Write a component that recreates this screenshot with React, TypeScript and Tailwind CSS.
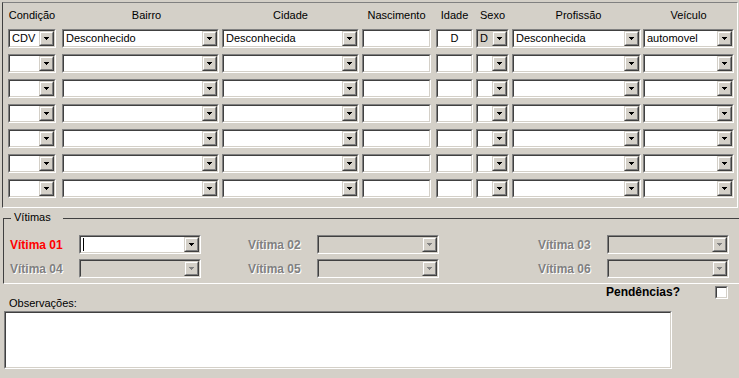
import React from "react";

const FONT = "font-['Liberation_Sans',Arial,sans-serif]";

function Arrow({ disabled }: { disabled?: boolean }) {
  const c = disabled ? "#808080" : "#000000";
  return (
    <svg width="5" height="3" viewBox="0 0 5 3" shapeRendering="crispEdges">
      <rect x="0" y="0" width="5" height="1" fill={c} />
      <rect x="1" y="1" width="3" height="1" fill={c} />
      <rect x="2" y="2" width="1" height="1" fill={c} />
    </svg>
  );
}

function DropBtn({ disabled }: { disabled?: boolean }) {
  return (
    <div className="w-[15px] h-full shrink-0 border border-t-[#d4d0c8] border-l-[#d4d0c8] border-r-[#404040] border-b-[#404040]">
      <div className="h-full border border-t-white border-l-white border-r-[#808080] border-b-[#808080] bg-[#d4d0c8] flex items-center justify-center">
        <Arrow disabled={disabled} />
      </div>
    </div>
  );
}

function Sunken({
  w,
  h = "h-[19px]",
  bg = "bg-white",
  children,
}: {
  w: string;
  h?: string;
  bg?: string;
  children?: React.ReactNode;
}) {
  return (
    <div className={`${w} ${h} shrink-0 border border-t-[#808080] border-l-[#808080] border-r-white border-b-white`}>
      <div className={`h-full border border-t-[#404040] border-l-[#404040] border-r-[#d4d0c8] border-b-[#d4d0c8] flex ${bg}`}>
        {children}
      </div>
    </div>
  );
}

function Combo({
  w,
  text = "",
  bg = "bg-white",
  disabled,
  caret,
}: {
  w: string;
  text?: string;
  bg?: string;
  disabled?: boolean;
  caret?: boolean;
}) {
  return (
    <Sunken w={w} bg={bg}>
      <div className="flex-1 min-w-0 flex items-center pl-[2px] text-[11px] leading-[13px] text-black whitespace-nowrap overflow-hidden">
        {caret && <div className="w-px h-[13px] bg-black" />}
        {text}
      </div>
      <DropBtn disabled={disabled} />
    </Sunken>
  );
}

function TextBox({ w, text = "", center }: { w: string; text?: string; center?: boolean }) {
  return (
    <Sunken w={w}>
      <div
        className={`flex-1 flex items-center text-[11px] leading-[13px] text-black ${
          center ? "justify-center" : "pl-[2px]"
        }`}
      >
        {text}
      </div>
    </Sunken>
  );
}

type Col = { w: string; ml: string; label: string; kind: "combo" | "text"; hdr: string };

const cols: Col[] = [
  { w: "w-[48px]", ml: "ml-0", label: "Condição", kind: "combo", hdr: "" },
  { w: "w-[157px]", ml: "ml-[6px]", label: "Bairro", kind: "combo", hdr: "pl-[12px]" },
  { w: "w-[137px]", ml: "ml-[3px]", label: "Cidade", kind: "combo", hdr: "" },
  { w: "w-[69px]", ml: "ml-[3px]", label: "Nascimento", kind: "text", hdr: "" },
  { w: "w-[37px]", ml: "ml-[5px]", label: "Idade", kind: "text", hdr: "" },
  { w: "w-[33px]", ml: "ml-[3px]", label: "Sexo", kind: "combo", hdr: "" },
  { w: "w-[129px]", ml: "ml-[3px]", label: "Profissão", kind: "combo", hdr: "pl-[4px]" },
  { w: "w-[91px]", ml: "ml-[2px]", label: "Veículo", kind: "combo", hdr: "" },
];

const firstRow = ["CDV", "Desconhecido", "Desconhecida", "", "D", "D", "Desconhecida", "automovel"];

function VLabel({ text, active }: { text: string; active?: boolean }) {
  return (
    <div
      className={`w-[69px] shrink-0 text-[12px] leading-[14px] font-bold ${
        active ? "text-[#ff0000]" : "text-[#808080] [text-shadow:1px_1px_0_#ffffff]"
      }`}
    >
      {text}
    </div>
  );
}

export default function App() {
  return (
    <div className={`w-[739px] h-[378px] bg-[#d4d0c8] overflow-hidden ${FONT} flex flex-col`}>
      {/* Top grid panel */}
      <div className="ml-[2px] mt-[2px] w-[736px] h-[206px] border border-t-[#808080] border-l-[#404040] border-r-white border-b-white pl-[5px] flex flex-col">
        <div className="flex h-[26px] items-center">
          {cols.map((c, i) => (
            <div
              key={i}
              className={`${c.w} ${c.ml} ${c.hdr} shrink-0 text-center text-[11px] leading-[13px] text-black whitespace-nowrap pb-[2px]`}
            >
              {c.label}
            </div>
          ))}
        </div>
        <div className="flex flex-col gap-[6px]">
          {Array.from({ length: 7 }).map((_, r) => (
            <div key={r} className="flex">
              {cols.map((c, i) => {
                const t = r === 0 ? firstRow[i] : "";
                return (
                  <div key={i} className={`${c.ml} shrink-0`}>
                    {c.kind === "combo" ? (
                      <Combo w={c.w} text={t} bg={r === 0 && i === 5 ? "bg-[#d4d0c8]" : "bg-white"} />
                    ) : (
                      <TextBox w={c.w} text={t} center={i === 4} />
                    )}
                  </div>
                );
              })}
            </div>
          ))}
        </div>
      </div>

      {/* Vítimas group */}
      <div className="relative ml-[3px] mt-[10px] h-[66px] border-t border-l border-t-[#404040] border-l-[#404040] border-b border-b-white pt-[16px] pl-[6px] flex flex-col gap-[5px]">
        <div className="absolute left-[7px] top-[-8px] bg-[#d4d0c8] pl-[3px] pr-[12px] text-[11px] leading-[13px] text-black">
          Vítimas
        </div>
        <div className="flex items-center">
          <VLabel text="Vítima 01" active />
          <Combo w="w-[122px]" caret />
          <div className="ml-[47px] flex items-center">
            <VLabel text="Vítima 02" />
            <Combo w="w-[122px]" bg="bg-[#d4d0c8]" disabled />
          </div>
          <div className="ml-[99px] flex items-center">
            <VLabel text="Vítima 03" />
            <Combo w="w-[122px]" bg="bg-[#d4d0c8]" disabled />
          </div>
        </div>
        <div className="flex items-center">
          <VLabel text="Vítima 04" />
          <Combo w="w-[122px]" bg="bg-[#d4d0c8]" disabled />
          <div className="ml-[47px] flex items-center">
            <VLabel text="Vítima 05" />
            <Combo w="w-[122px]" bg="bg-[#d4d0c8]" disabled />
          </div>
          <div className="ml-[99px] flex items-center">
            <VLabel text="Vítima 06" />
            <Combo w="w-[122px]" bg="bg-[#d4d0c8]" disabled />
          </div>
        </div>
      </div>

      {/* Observações / Pendências */}
      <div className="flex h-[27px]">
        <div className="self-end pl-[9px] mb-[1px] text-[11px] leading-[13px] text-black">Observações:</div>
        <div className="ml-auto self-start mt-[1px] flex items-center mr-[11px]">
          <div className="text-[12px] leading-[14px] font-bold text-black">Pendências?</div>
          <div className="ml-[35px] w-[13px] h-[13px] border border-t-[#808080] border-l-[#808080] border-r-white border-b-white">
            <div className="h-full border border-t-[#404040] border-l-[#404040] border-r-[#d4d0c8] border-b-[#d4d0c8] bg-white" />
          </div>
        </div>
      </div>
      <div className="ml-[4px]">
        <Sunken w="w-[668px]" h="h-[58px]" />
      </div>
    </div>
  );
}
